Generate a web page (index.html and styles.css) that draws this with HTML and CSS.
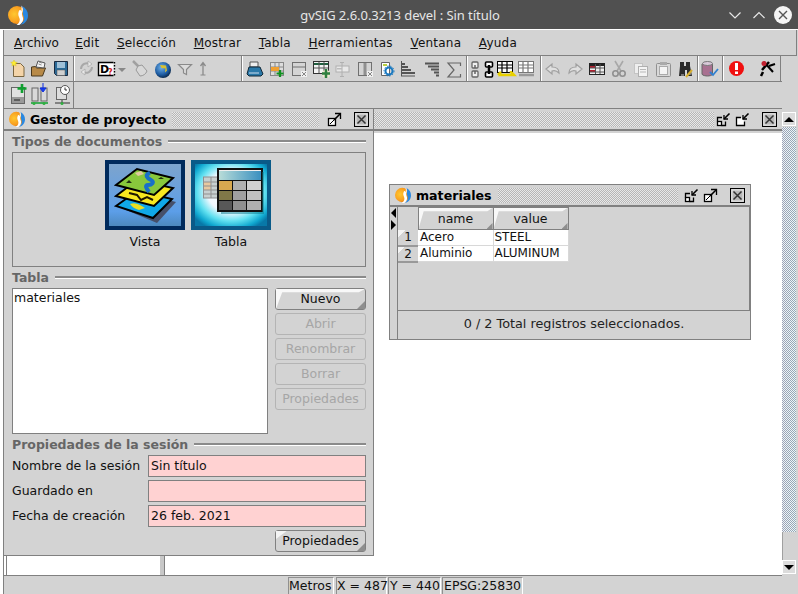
FILE: index.html
```html
<!DOCTYPE html>
<html lang="es">
<head>
<meta charset="utf-8">
<title>gvSIG 2.6.0.3213 devel : Sin título</title>
<link rel="stylesheet" href="styles.css">
</head>
<body>
<svg class="defs" width="0" height="0" aria-hidden="true">
  <defs>
    <radialGradient id="orange" cx="35%" cy="45%" r="70%"><stop offset="0" stop-color="#ffc830"/><stop offset=".6" stop-color="#f9a020"/><stop offset="1" stop-color="#e87a10"/></radialGradient>
    <linearGradient id="vistaBg" x1="0" y1="0" x2="0" y2="1"><stop offset="0" stop-color="#7ea4cc"/><stop offset=".75" stop-color="#5c9ee8"/><stop offset="1" stop-color="#4a86b8"/></linearGradient>
    <radialGradient id="tablaBg" cx="50%" cy="45%" r="62%"><stop offset="0" stop-color="#fff"/><stop offset=".5" stop-color="#f0f8ff"/><stop offset=".72" stop-color="#60e0f0"/><stop offset=".9" stop-color="#10a8d0"/><stop offset="1" stop-color="#0878a8"/></radialGradient>
    <linearGradient id="tablaHead" x1="0" y1="0" x2="1" y2="0"><stop offset="0" stop-color="#b8dcd8"/><stop offset="1" stop-color="#3a90c0"/></linearGradient>
    <radialGradient id="globe" cx="40%" cy="35%" r="65%"><stop offset="0" stop-color="#6fb0e8"/><stop offset=".7" stop-color="#1c5aa0"/><stop offset="1" stop-color="#0c2c50"/></radialGradient>
    <symbol id="logo" viewBox="0 0 20 20">
      <circle cx="9" cy="10" r="9" fill="url(#orange)"/>
      <path d="M14 1c4 2 6 5.500 6 9.500 0 4.500-3 8.500-7.500 9.300 2-1.800 3.800-3.800 3.400-6.800-.3-2.500-1.700-3.800-1-6.300.4-1.500.5-3.500-.9-5.700z" fill="#2a88e0"/>
      <path d="M13.500 .6c1.600 2.500 1.500 4.800.7 6.900-.8 2.500.6 3.500.9 6 .2 2.600-1.300 4.600-3.800 6.400-1 .2-1.800.1-2.800 0 2-1.200 3.500-3.200 3.200-5.800-.3-2.300-2-3.800-1.200-6.700.5-1.800 1.300-3.800 3-.8z" fill="#fff"/>
    </symbol>
    <symbol id="w-max" viewBox="0 0 15 15">
      <rect x="1.500" y="6.500" width="7" height="7" fill="#fff" stroke="#000" stroke-width="1.300"/>
      <path d="M3 12 8 7" stroke="#000"/><path d="M8 1.500h5.500V7" stroke="#000" fill="none" stroke-width="1.300"/><path d="M13 2 7 8" stroke="#000" stroke-width="1.600"/>
    </symbol>
    <symbol id="w-min" viewBox="0 0 15 15">
      <rect x="1.500" y="9.500" width="4" height="4" fill="#fff" stroke="#000" stroke-width="1.300"/>
      <path d="M1.500 9.500V5.500h4.500M5.500 13.500h4V9.500" stroke="#000" fill="none" stroke-width="1.300"/><path d="M13.500 1.500 8 7" stroke="#000" stroke-width="1.600"/><path d="M8 3v4h4" stroke="#000" fill="none" stroke-width="1.300"/>
    </symbol>
    <symbol id="w-min2" viewBox="0 0 15 15">
      <path d="M6 5.500H1.500v8h8V9.500" fill="#fff" stroke="#000" stroke-width="1.300"/>
      <path d="M13.500 1.500 8 7" stroke="#000" stroke-width="1.600"/><path d="M8 3v4h4" stroke="#000" fill="none" stroke-width="1.300"/>
    </symbol>
    <symbol id="w-close" viewBox="0 0 15 15">
      <rect x=".5" y=".5" width="14" height="14" fill="#c8c8c8" stroke="#000"/>
      <rect x="2" y="2" width="11" height="11" fill="#b8b8b8" stroke="#fff" stroke-width=".6"/>
      <path d="M3.500 3.500l8 8M11.500 3.500l-8 8" stroke="#333" stroke-width="1.500"/>
    </symbol>
  </defs>
</svg>

<div class="window">
  <header class="titlebar">
    <svg class="title-logo" width="20" height="20"><use href="#logo"/></svg>
    <h1 class="title-text">gvSIG 2.6.0.3213 devel : Sin título</h1>
    <div class="title-controls">
      <svg width="14" height="10" viewBox="0 0 14 10"><path d="M1.500 2.500 7 8l5.500-5.500" fill="none" stroke="#e8e8e8" stroke-width="1.200"/></svg>
      <svg width="14" height="10" viewBox="0 0 14 10"><path d="M1.500 8 7 2.500 12.500 8" fill="none" stroke="#e8e8e8" stroke-width="1.200"/></svg>
      <svg class="title-close" width="18" height="18" viewBox="0 0 18 18"><circle cx="9" cy="9" r="9" fill="#f4f4f4"/><path d="M5 5l8 8M13 5l-8 8" stroke="#555" stroke-width="1.400"/></svg>
    </div>
  </header>

  <div class="client">
    <nav class="menubar">
      <span class="menu"><u>A</u>rchivo</span>
      <span class="menu"><u>E</u>dit</span>
      <span class="menu"><u>S</u>elección</span>
      <span class="menu"><u>M</u>ostrar</span>
      <span class="menu"><u>T</u>abla</span>
      <span class="menu"><u>H</u>erramientas</span>
      <span class="menu"><u>V</u>entana</span>
      <span class="menu"><u>A</u>yuda</span>
    </nav>

    <div class="toolrow">
      <div class="tgroup">
        <svg width="24" height="25" viewBox="4 56 24 25"><path d="M13.500 63.500h7l3.500 3.500v9.500h-10.500z" fill="#f4d4a8" stroke="#7a6640"/><path d="M14 60l1 2 2.300.3-1.700 1.500.5 2.300-2.100-1.200-2.100 1.200.5-2.300-1.700-1.500 2.300-.3z" fill="#ffee30" stroke="#d8c030" stroke-width=".5"/></svg>
        <svg width="22" height="25" viewBox="28 56 22 25"><path d="M31.500 67v9h11l3-8h-9l-1-1.500z" fill="#b88a48" stroke="#4a3a20"/><path d="M36 67l2-6 7 2-1 5z" fill="#f4f4f4" stroke="#555"/><path d="M39 62l3 1M38.500 64l3 1" stroke="#888"/></svg>
        <svg width="23" height="25" viewBox="50 56 23 25"><path d="M54.500 61.500h13v14h-11l-2-2z" fill="#2a6a98" stroke="#1a2a40"/><rect x="57" y="62" width="8" height="6" fill="#9ec0d8"/><rect x="57" y="70" width="8" height="5.500" fill="#d0d0d0" stroke="#555" stroke-width=".5"/></svg>
      </div>
      <div class="tgroup">
        <svg width="22" height="25" viewBox="75 56 22 25"><g fill="none" stroke="#a8a8a8" stroke-width="2"><path d="M81 69a6 6 0 0 1 9-5"/><path d="M92 67a6 6 0 0 1-9 5"/></g><path d="M88 61l4 3-4 3zM85 69l-4 3 4 3z" fill="#e8e8e8" stroke="#a8a8a8" stroke-width=".7"/></svg>
        <svg width="19" height="25" viewBox="97 56 19 25"><path d="M113.500 62.500h-15v13h15" fill="#fff" stroke="#000" stroke-width="1.400"/><path d="M114.500 62v14" stroke="#000" stroke-dasharray="1.500 1.500" stroke-width="1.400"/><text x="100" y="73" class="d-letter">D</text><text x="108" y="75" class="d-q">?</text></svg>
        <svg width="14" height="25" viewBox="116 56 14 25"><path d="M118 68h8l-4 4z" fill="#888"/></svg>
        <svg width="22" height="25" viewBox="130 56 22 25"><path d="M133 61l6 6" stroke="#a0a0a0" stroke-width="2.500"/><path d="M138 66l4-1 5 6c-1 3-4 5-7 5l-4-6z" fill="#d8d8d8" stroke="#999"/></svg>
        <svg width="23" height="25" viewBox="152 56 23 25"><circle cx="163" cy="70" r="8" fill="url(#globe)"/><path d="M160 65l6 .5 1 5-2 2 .5-4-4-.5z" fill="#d8c030"/></svg>
        <svg width="21" height="25" viewBox="175 56 21 25"><path d="M178.500 64.500h13l-5 5v5l-3-1.500v-3.500z" fill="#dcdcdc" stroke="#8a8a8a" stroke-width="1.200"/></svg>
        <svg width="45" height="25" viewBox="196 56 45 25"><path d="M203 63v12M200.500 66l2.500-3.500 2.500 3.500" fill="none" stroke="#8a8a8a" stroke-width="1.300"/><path d="M200.500 75h5" stroke="#8a8a8a"/></svg>
      </div>
      <div class="tgroup">
        <svg width="24" height="25" viewBox="243 56 24 25"><path d="M250 62h8v5h-8z" fill="#eee" stroke="#555"/><path d="M249 67h11l3 7-2 2h-12l-2-2z" fill="#2a78a8" stroke="#102838"/><path d="M249 73h10" stroke="#cde"/></svg>
        <svg width="22" height="25" viewBox="267 56 22 25"><rect x="270.500" y="62.500" width="13" height="13" fill="#ddd" stroke="#888"/><path d="M275 63v12M279 63v12M271 67h12M271 71h12" stroke="#888"/><rect x="271" y="67" width="8" height="4" fill="#f0a030"/><path d="M280 70v7M276.500 73.500h7" stroke="#109020" stroke-width="2.200"/></svg>
        <svg width="22" height="25" viewBox="289 56 22 25"><rect x="292.500" y="62.500" width="13" height="13" fill="#d4d4d4" stroke="#707070"/><path d="M293 67h12" stroke="#707070"/><rect x="301" y="71" width="6" height="6" fill="#f0f0f0"/><path d="M302 72l4 4M306 72l-4 4" stroke="#888"/></svg>
        <svg width="22" height="25" viewBox="311 56 22 25"><rect x="313.500" y="61.500" width="15" height="12" fill="#f4f4f4" stroke="#333"/><path d="M314 64h14" stroke="#206040" stroke-width="2"/><path d="M319 62v11M324 62v11M314 68h14" stroke="#555"/><circle cx="326" cy="74" r="4" fill="#f0e8d0"/><path d="M326 69v9M322 73.500h8" stroke="#308040" stroke-width="2.500"/></svg>
        <svg width="23" height="25" viewBox="333 56 23 25"><rect x="336" y="66" width="13" height="6" fill="#e8e8e8" stroke="#b0b0b0"/><path d="M342 63v13M340 62.500h4M340 76.500h4" stroke="#b0b0b0"/><rect x="337" y="68" width="5" height="1.500" fill="#bbb"/></svg>
        <svg width="23" height="25" viewBox="356 56 23 25"><rect x="358.500" y="62.500" width="13" height="13" fill="#d4d4d4" stroke="#707070"/><path d="M365 63v12" stroke="#909090" stroke-width="3"/><rect x="367" y="71" width="6" height="6" fill="#f0f0f0"/><path d="M368 72l4 4M372 72l-4 4" stroke="#888"/></svg>
        <svg width="20" height="25" viewBox="379 56 20 25"><path d="M381.500 62.500h8v13h-8z" fill="#fff" stroke="#666"/><rect x="383" y="64" width="4" height="2" fill="#b8d040"/><circle cx="389" cy="71" r="3.500" fill="none" stroke="#1878c0" stroke-width="2"/><circle cx="389" cy="71" r="5" fill="none" stroke="#1878c0" stroke-dasharray="1.500 1.500"/></svg>
        <svg width="24" height="25" viewBox="399 56 24 25"><path d="M401.500 61v15" stroke="#555" stroke-width="1"/><path d="M401 64h4M401 67h7M401 70h10M401 73h14" stroke="#555" stroke-width="2"/><path d="M401 76h14" stroke="#555"/></svg>
        <svg width="23" height="25" viewBox="423 56 23 25"><path d="M425 63.500h14M428 66.500h11M431 69.500h8M434 72.500h5M436 75.500h3" stroke="#555" stroke-width="2"/></svg>
        <svg width="20" height="25" viewBox="446 56 20 25"><path d="M460.500 66v-3H448l6 7-6 7h12.500v-3" fill="none" stroke="#666" stroke-width="1.200"/></svg>
      </div>
      <div class="tgroup">
        <svg width="15" height="25" viewBox="468 56 15 25"><g fill="#f0f0f0" stroke="#666" stroke-width="1.300"><rect x="472" y="62" width="6" height="6" rx="1"/><rect x="472" y="71" width="6" height="6" rx="1"/></g><path d="M475 65v3M475 71v3" stroke="#666" stroke-width="1.500"/></svg>
        <svg width="14" height="25" viewBox="483 56 14 25"><g fill="#fff" stroke="#000" stroke-width="1.600"><rect x="485.500" y="62" width="7" height="5" rx="1"/><rect x="485.500" y="72" width="7" height="5" rx="1"/></g><path d="M489 65v9" stroke="#000" stroke-width="2.500"/></svg>
        <svg width="20" height="25" viewBox="497 56 20 25"><rect x="497.500" y="61.500" width="15" height="11" fill="#fff" stroke="#000"/><path d="M502 62v10M507 62v10M498 65h14M498 68h14" stroke="#000" stroke-width="1.200"/><path d="M498 75h16l-3-3v-1M498 75l3-3" fill="none" stroke="#e8d000" stroke-width="2.500"/></svg>
        <svg width="23" height="25" viewBox="517 56 23 25"><rect x="518.500" y="61.500" width="15" height="11" fill="#fff" stroke="#777"/><path d="M523 62v10M528 62v10M519 65h14M519 68h14" stroke="#777" stroke-width="1.200"/><path d="M519 75h15" stroke="#999" stroke-width="2.500"/></svg>
      </div>
      <div class="tgroup">
        <svg width="24" height="25" viewBox="542 56 24 25"><path d="M546 69l6-5v3c4 0 7 2 7 6-2-2-4-3-7-2v3z" fill="#e0e0e0" stroke="#a0a0a0" stroke-width="1.200"/></svg>
        <svg width="22" height="25" viewBox="566 56 22 25"><path d="M582 69l-6-5v3c-4 0-7 2-7 6 2-2 4-3 7-2v3z" fill="#e0e0e0" stroke="#a0a0a0" stroke-width="1.200"/></svg>
        <svg width="23" height="25" viewBox="588 56 23 25"><rect x="589.500" y="63.500" width="15" height="11" fill="#eee" stroke="#222"/><rect x="590" y="64" width="14" height="2" fill="#222"/><rect x="590" y="66" width="5" height="2" fill="#b02030"/><rect x="590" y="70" width="5" height="2" fill="#b02030"/><path d="M595.500 64v10M600 64v10M590 68h14M590 72h14" stroke="#555"/></svg>
        <svg width="21" height="25" viewBox="611 56 21 25"><path d="M615 61l6 10M623 61l-6 10" stroke="#a8a8a8" stroke-width="1.600"/><circle cx="615.500" cy="73.500" r="2.700" fill="none" stroke="#909090" stroke-width="1.600"/><circle cx="622.500" cy="73.500" r="2.700" fill="none" stroke="#909090" stroke-width="1.600"/></svg>
        <svg width="22" height="25" viewBox="632 56 22 25"><rect x="634.500" y="63.500" width="8" height="10" fill="#eee" stroke="#c4c4c4"/><rect x="638.500" y="66.500" width="9" height="10" fill="#f4f4f4" stroke="#b0b0b0"/><path d="M640 69.500h6M640 72h6" stroke="#b8b8b8"/></svg>
        <svg width="23" height="25" viewBox="654 56 23 25"><rect x="656.500" y="63.500" width="14" height="13" rx="1" fill="#d8d8d8" stroke="#909090"/><rect x="660" y="62" width="7" height="3" fill="#aaa"/><rect x="659.500" y="66.500" width="8" height="8" fill="#f4f4f4" stroke="#aaa"/></svg>
        <svg width="20" height="25" viewBox="677 56 20 25"><path d="M680 62h4v4h2v-4h4v4l2 10h-5v-6h-2v6h-6l1-10z" fill="#2a2a2a"/><path d="M681 76h3v-2h-3zM688 75h3v-2h-3z" fill="#777"/><path d="M686 77l6-7" stroke="#d8b030" stroke-width="2"/></svg>
      </div>
      <div class="tgroup">
        <svg width="23" height="25" viewBox="700 56 23 25"><path d="M703 64v10c0 1.500 4 2 5.500 2s5-.5 5-2V64z" fill="#a87090" stroke="#666"/><ellipse cx="708.500" cy="63.500" rx="5" ry="2" fill="#d8c8d8" stroke="#777"/><path d="M711 72l3 3 5-6" fill="none" stroke="#3080d0" stroke-width="1.800"/></svg>
      </div>
      <div class="tgroup">
        <svg width="30" height="25" viewBox="725 56 30 25"><circle cx="737.500" cy="68.500" r="7.500" fill="#f01010"/><rect x="736" y="63" width="3" height="7" fill="#fff"/><rect x="736" y="71.500" width="3" height="2.500" fill="#fff"/></svg>
        <svg width="26" height="25" viewBox="755 56 26 25"><path d="M764 72l-2 4M770 62l-7 8" stroke="#000" stroke-width="2.500"/><path d="M765 62l9 10" stroke="#000" stroke-width="2"/><path d="M770 66l6-2" stroke="#000" stroke-width="2"/><circle cx="765" cy="63.500" r="2.500" fill="#c02030"/></svg>
      </div>
    </div>

    <div class="toolrow2">
      <div class="tgroup">
        <svg width="24" height="26" viewBox="4 82 24 26"><rect x="11.500" y="87.500" width="13" height="16" fill="#e0e0e0" stroke="#666"/><rect x="12" y="97" width="12" height="6" fill="#999"/><path d="M14 100h6" stroke="#222"/><path d="M22 84v9M17.500 88.500h9" stroke="#10a030" stroke-width="2.600"/></svg>
        <svg width="22" height="26" viewBox="28 82 22 26"><rect x="32" y="88" width="6" height="13" fill="#d8d8d8" stroke="#666"/><rect x="41" y="88" width="6" height="13" fill="#d8d8d8" stroke="#666"/><path d="M43 83v6M40 88h6l-3 4z" stroke="#1030e0" fill="#1840f0"/><path d="M31 103h17" stroke="#10a030" stroke-width="1.500"/><circle cx="34" cy="103.500" r="1.500" fill="#30b040"/><circle cx="44" cy="103.500" r="1.500" fill="#30b040"/></svg>
        <svg width="23" height="26" viewBox="50 82 23 26"><rect x="56.500" y="87.500" width="10" height="12" fill="#ddd" stroke="#666"/><circle cx="65" cy="90" r="4.500" fill="#fff" stroke="#555"/><path d="M65 87.500V90h2" stroke="#333" fill="none"/><path d="M55 103h15M62 100v3" stroke="#333"/><circle cx="62" cy="103.500" r="1.500" fill="#30b040"/></svg>
      </div>
    </div>

    <div class="workspace">
      <main class="desk">
        <div class="dock">
          <div class="dock-item"></div>
          <div class="dock-gap"></div>
          <div class="dock-rest"></div>
        </div>

        <section class="iframe back-frame">
          <div class="frame-title">
            <span class="stipple"></span>
            <div class="frame-btns back-btns">
              <svg width="15" height="15"><use href="#w-min"/></svg>
              <svg width="15" height="15"><use href="#w-min2"/></svg>
              <svg class="btn-close" width="15" height="15"><use href="#w-close"/></svg>
            </div>
          </div>
        </section>

        <section class="iframe gestor">
          <div class="frame-title">
            <svg class="frame-logo" width="16" height="16"><use href="#logo"/></svg>
            <span class="frame-name">Gestor de proyecto</span>
            <span class="stipple"></span>
            <div class="frame-btns">
              <svg width="15" height="15"><use href="#w-max"/></svg>
              <svg class="btn-close" width="15" height="15"><use href="#w-close"/></svg>
            </div>
          </div>
          <div class="gestor-body">
            <div class="sect"><span>Tipos de documentos</span></div>
            <div class="doc-types">
              <div class="doc-type">
                <svg width="80" height="70" viewBox="0 0 80 70">
                  <rect x="2" y="2" width="76" height="66" fill="url(#vistaBg)" stroke="#002a5c" stroke-width="4"/>
                  <path d="M14 47 35 33 71 42 52 63z" fill="#46506a"/>
                  <path d="M11 46 32 31 67 39 48 58z" fill="#10a8e8" stroke="#000" stroke-width="2"/>
                  <path d="M25 44c6-2 10 1 15 4l-6 2c-4-1-7-3-9-6z" fill="#e8e020"/>
                  <path d="M11 36 32 20 68 28 49 46z" fill="#f8e820" stroke="#000" stroke-width="2"/>
                  <path d="M24 33l8 2 4 5 6-3 6 3M36 27l6 3 8-1" fill="none" stroke="#201800" stroke-width="2"/>
                  <path d="M11 25 32 9 68 18 49 35z" fill="#88c83c" stroke="#000" stroke-width="2"/>
                  <path d="M45 13c-6 2-3 5 1 7s1 5-3 5-1 4 1 7" fill="none" stroke="#1870c8" stroke-width="4"/>
                  <path d="M21 23l3-3 3 3zM53 19l3-2 3 2z" fill="#203010"/>
                  <path d="M30 13l6-2 3 3-6 2z" fill="#e0c8a0"/>
                </svg>
                <span class="doc-label">Vista</span>
              </div>
              <div class="doc-type">
                <svg width="80" height="70" viewBox="0 0 80 70">
                  <rect x="2" y="2" width="76" height="66" fill="url(#tablaBg)" stroke="#0a5a88" stroke-width="4"/>
                  <rect x="12.500" y="17" width="16" height="21" fill="#c8d0d0" stroke="#909090"/>
                  <rect x="13" y="22" width="7" height="8" fill="#e8c8a0"/>
                  <path d="M13 22h15M13 26h15M13 30h15M13 34h15M20 17v21" stroke="#909090"/>
                  <rect x="27" y="9" width="44" height="42" fill="#eee" stroke="#111" stroke-width="2"/>
                  <rect x="28" y="11" width="42" height="9" fill="url(#tablaHead)"/>
                  <rect x="28" y="21" width="13" height="9" fill="#d8a850"/><rect x="42" y="21" width="13" height="9" fill="#b0b0b0"/><rect x="56" y="21" width="14" height="9" fill="#d0d0d0"/>
                  <rect x="28" y="31" width="13" height="9" fill="#807848"/><rect x="42" y="31" width="13" height="9" fill="#a0a0a0"/><rect x="56" y="31" width="14" height="9" fill="#c0c0c0"/>
                  <rect x="28" y="41" width="13" height="9" fill="#585858"/><rect x="42" y="41" width="13" height="9" fill="#909090"/><rect x="56" y="41" width="14" height="9" fill="#b0b0b0"/>
                  <path d="M28 20.500h42M28 30.500h42M28 40.500h42M41.500 21v29M55.500 21v29" stroke="#111"/>
                  <path d="M72 12v41H30" fill="none" stroke="#08788a" stroke-opacity=".5" stroke-width="2"/>
                </svg>
                <span class="doc-label">Tabla</span>
              </div>
            </div>
            <div class="sect"><span>Tabla</span></div>
            <div class="doc-list-row">
              <div class="doc-list">materiales</div>
              <div class="doc-actions">
                <button class="btn btn-main" type="button">Nuevo</button>
                <button class="btn" type="button" disabled>Abrir</button>
                <button class="btn" type="button" disabled>Renombrar</button>
                <button class="btn" type="button" disabled>Borrar</button>
                <button class="btn" type="button" disabled>Propiedades</button>
              </div>
            </div>
            <div class="sect"><span>Propiedades de la sesión</span></div>
            <div class="props">
              <label class="prop-label">Nombre de la sesión</label><div class="prop-field">Sin título</div>
              <label class="prop-label">Guardado en</label><div class="prop-field"></div>
              <label class="prop-label">Fecha de creación</label><div class="prop-field">26 feb. 2021</div>
            </div>
            <div class="props-foot"><button class="btn btn-soft" type="button">Propiedades</button></div>
          </div>
        </section>

        <section class="iframe materiales">
          <div class="frame-title">
            <svg class="frame-logo" width="16" height="16"><use href="#logo"/></svg>
            <span class="frame-name">materiales</span>
            <span class="stipple"></span>
            <div class="frame-btns mat-btns">
              <svg width="15" height="15"><use href="#w-min"/></svg>
              <svg width="15" height="15"><use href="#w-max"/></svg>
              <svg class="btn-close" width="15" height="15"><use href="#w-close"/></svg>
            </div>
          </div>
          <div class="mat-body">
            <div class="splitter"><i class="arr-l"></i><i class="arr-r"></i></div>
            <div class="mat-main">
              <div class="mat-table-pane">
                <table class="grid">
                  <thead><tr><th class="corner"></th><th class="col">name</th><th class="col">value</th></tr></thead>
                  <tbody>
                    <tr><th class="rowh">1</th><td>Acero</td><td>STEEL</td></tr>
                    <tr><th class="rowh">2</th><td>Aluminio</td><td>ALUMINUM</td></tr>
                  </tbody>
                </table>
              </div>
              <div class="mat-status">0 / 2 Total registros seleccionados.</div>
            </div>
          </div>
        </section>
      </main>

      <aside class="vscroll">
        <div class="sb-btn"><i class="tri-up"></i></div>
        <div class="sb-thumb"></div>
        <div class="sb-track"></div>
        <div class="sb-btn"><i class="tri-down"></i></div>
      </aside>
    </div>

    <footer class="statusbar">
      <span class="st st-m">Metros</span>
      <span class="st st-x">X = 487</span>
      <span class="st st-y">Y = 440</span>
      <span class="st st-e">EPSG:25830</span>
    </footer>
  </div>
</div>
</body>
</html>
```

FILE: styles.css
```css
* { box-sizing: border-box; }
html, body { margin: 0; padding: 0; }
body {
  width: 798px;
  height: 594px;
  overflow: hidden;
  background: #fff;
  font-family: "DejaVu Sans", sans-serif;
  font-size: 12.5px;
  color: #111;
}
.defs { position: absolute; }
svg { display: block; flex: none; }
.d-letter { font: 700 11px "DejaVu Sans", sans-serif; fill: #000; }
.d-q { font: 700 8px "DejaVu Sans", sans-serif; fill: #d02020; }

.window { display: flex; flex-direction: column; height: 594px; }

.titlebar {
  height: 29px;
  background: #505050;
  display: flex;
  align-items: center;
  position: relative;
  flex: none;
}
.title-logo { margin-left: 8px; }
.title-text {
  position: absolute;
  left: 2px;
  right: 0;
  margin: 0;
  text-align: center;
  font: 400 13px "Noto Sans", sans-serif;
  letter-spacing: -.05px;
  color: #e6e6e6;
}
.title-controls {
  margin-left: auto;
  margin-right: 6px;
  display: flex;
  align-items: center;
  gap: 10px;
  position: relative;
}
.title-close { margin-left: -2px; }

.client {
  flex: 1;
  margin-top: 1px;
  margin-left: 3px;
  border-left: 1px solid #808080;
  display: flex;
  flex-direction: column;
  background: #d3d3d3;
  min-height: 0;
}
.menubar {
  height: 26px;
  flex: none;
  display: flex;
  align-items: center;
  padding-left: 1px;
  padding-top: 1px;
  border-bottom: 1px solid #808080;
  border-right: 1px solid #808080;
  margin-right: 1px;
  font-size: 12px;
}
.menu { padding: 0 8.8px; letter-spacing: .22px; }
.menu:first-child { letter-spacing: 0; padding: 0 7.5px 0 9px; }

.toolrow {
  height: 26px;
  flex: none;
  display: flex;
  width: 778px;
  border-bottom: 1px solid #808080;
}
.toolrow2 {
  height: 26px;
  flex: none;
  display: flex;
}
.tgroup {
  display: flex;
  border-right: 1px solid #808080;
  border-left: 1px solid #fff;
}
.toolrow .tgroup:first-child, .toolrow2 .tgroup { border-left: 0; }

.workspace { flex: 1; display: flex; min-height: 0; }
.desk {
  width: 778px;
  background: #fff;
  position: relative;
  display: flex;
  flex-direction: column;
  justify-content: flex-end;
}
.dock {
  height: 21px;
  display: flex;
  border-bottom: 1px solid #808080;
  padding-left: 2px;
}
.dock-item { width: 154px; border-left: 1px solid #808080; background: #fff; }
.dock-gap { width: 5px; background: #c8c8c8; border-right: 1px solid #808080; }
.dock-rest { flex: 1; }

.iframe {
  position: absolute;
  background: #d3d3d3;
  border: 1px solid #808080;
}
.back-frame { left: 0; top: 0; width: 778px; height: 25px; border-width: 1px 0 0 0; }
.gestor { left: 0; top: 0; width: 370px; height: 448px; border-left-width: 0; }
.materiales { left: 385px; top: 76px; width: 362px; height: 156px; }

.frame-title {
  height: 22px;
  display: flex;
  align-items: center;
  border-bottom: 2px solid #808080;
}
.frame-logo { margin-left: 5px; }
.frame-name {
  font-weight: 700;
  font-size: 12.6px;
  margin-left: 5px;
  color: #000;
  white-space: nowrap;
}
.stipple {
  flex: 1;
  height: 15px;
  background: repeating-conic-gradient(#b6b6b6 0 25%, #e8e8e8 0 50%) 0 0 / 2px 2px;
}
.gestor .stipple { margin-left: 6px; }
.materiales .stipple { margin-left: 6px; }
.frame-btns { display: flex; align-items: center; margin-left: 8px; margin-right: 4px; gap: 4px; }
.btn-close { margin-left: 8px; }
.back-btns { margin-left: 2px; margin-right: 5px; }
.mat-btns { margin-left: 6px; margin-right: 5px; }

.gestor-body { padding: 0 7px 0 8px; }
.sect {
  height: 21px;
  display: flex;
  align-items: center;
  gap: 6px;
  font-weight: 700;
  font-size: 12.5px;
  color: #666;
}
.sect::after {
  content: "";
  flex: 1;
  height: 2px;
  background: #8a8a8a;
  border-bottom: 1px solid #fff;
}
.doc-types {
  height: 115px;
  border: 1px solid #808080;
  display: flex;
  justify-content: center;
  gap: 6px;
  padding: 7px 2px 0 0;
}
.doc-type { display: flex; flex-direction: column; align-items: center; }
.doc-label { margin-top: 4px; font-size: 12.5px; }

.doc-list-row { display: flex; gap: 7px; height: 146px; }
.doc-list {
  width: 256px;
  background: #fff;
  border: 1px solid #808080;
  padding: 1px;
}
.doc-actions {
  width: 91px;
  display: flex;
  flex-direction: column;
  gap: 3px;
}
.btn {
  position: relative;
  height: 22px;
  width: 91px;
  padding: 0 0 2px;
  font: inherit;
  color: #111;
  background: #d3d3d3;
  border: 1px solid #808080;
  border-radius: 3px;
}
.btn:disabled {
  color: #a6a6a6;
  border-color: #b4b4b4;
}
.btn-main::before, .col::before {
  content: "";
  position: absolute;
  inset: 0;
  background: #f8f8f8;
  clip-path: polygon(0 0, 100% 0, 93% 16%, 7% 16%, 0 100%);
}
.btn-main::after, .btn-soft::after, .col::after {
  content: "";
  position: absolute;
  right: 0;
  bottom: 0;
  width: 8px;
  height: 8px;
  background: #8e8e8e;
  clip-path: polygon(100% 0, 100% 100%, 0 100%);
}
.btn-soft::before {
  content: "";
  position: absolute;
  inset: 0;
  background: #f4f4f4;
  clip-path: polygon(0 0, 12% 0, 0 40%);
}

.props {
  display: grid;
  grid-template-columns: 136px 218px;
  grid-auto-rows: 22px;
  row-gap: 3px;
}
.prop-label { align-self: center; padding-bottom: 2px; }
.prop-field {
  background: #ffd2d2;
  border: 1px solid #808080;
  padding: 0 0 2px 2px;
  display: flex;
  align-items: center;
}
.props-foot { display: flex; justify-content: flex-end; margin-top: 3px; }

.mat-body { display: flex; height: 132px; }
.splitter { width: 8px; position: relative; border-right: 1px solid #808080; }
.arr-l, .arr-r { position: absolute; left: 1px; width: 0; height: 0; border-style: solid; }
.arr-l { top: 1px; border-width: 5px 5px 5px 0; border-color: transparent #000 transparent transparent; }
.arr-r { top: 13px; border-width: 5px 0 5px 5px; border-color: transparent transparent transparent #000; }
.mat-main { flex: 1; display: flex; flex-direction: column; }
.mat-table-pane {
  height: 104px;
  border-bottom: 1px solid #808080;
  border-right: 1px solid #808080;
}
.mat-status { flex: 1; text-align: center; line-height: 26px; font-size: 12.8px; color: #222; }

.grid { border-collapse: collapse; table-layout: fixed; width: 170px; font-size: 12px; }
.grid th { font-weight: 400; padding: 0; position: relative; }
.corner { width: 20px; height: 22px; }
.col {
  width: 75px;
  height: 22px;
  background: #d3d3d3;
  border: 1px solid #808080;
  border-radius: 3px;
  font-size: 12.5px;
}
.col::after { width: 6px; height: 6px; }
.rowh {
  height: 16px;
  text-align: center;
  background: linear-gradient(135deg, #f4f4f4 0 20%, #d3d3d3 20%);
  border-bottom: 2px solid #999;
  line-height: 14px;
}
.grid td {
  background: #fff;
  height: 16px;
  padding: 0 0 0 1px;
  border-right: 1px solid #d8d8d8;
  border-bottom: 1px solid #d8d8d8;
  line-height: 15px;
}
.grid td:nth-child(2) { padding-left: 2px; }

.vscroll { width: 15px; display: flex; flex-direction: column; background: #d3d3d3; padding: 4px 1px 2px 0; }
.sb-btn {
  height: 14px;
  flex: none;
  background: #dcdcdc;
  border: 1px solid #fff;
  display: flex;
  align-items: center;
  justify-content: center;
}
.sb-thumb {
  height: 405px;
  margin-top: 1px;
  flex: none;
  background:
    repeating-conic-gradient(rgba(145, 150, 170, .75) 0 25%, rgba(245, 252, 252, .85) 0 50%) 0 0 / 2px 2px,
    linear-gradient(90deg, #c8c8dc, #a8dcdc);
}
.sb-track { flex: 1; border-left: 1px solid #a0a0a0; }
.tri-up, .tri-down { width: 0; height: 0; border-style: solid; }
.tri-up { border-width: 0 5px 5px 5px; border-color: transparent transparent #000 transparent; }
.tri-down { border-width: 5px 5px 0 5px; border-color: #000 transparent transparent transparent; }

.statusbar {
  height: 18px;
  flex: none;
  display: flex;
  padding-left: 284px;
  padding-top: 1px;
  font-size: 12.5px;
}
.st {
  display: block;
  border: 1px solid;
  border-color: #909090 #fff #fff #909090;
  border-bottom: 0;
  line-height: 16px;
  white-space: nowrap;
}
.st-m { width: 46px; margin-right: 2px; }
.st-x { width: 51px; margin-right: 1px; }
.st-y { width: 53px; margin-right: 1px; padding-left: 1px; }
.st-e { width: 81px; padding-left: 1px; }
```
